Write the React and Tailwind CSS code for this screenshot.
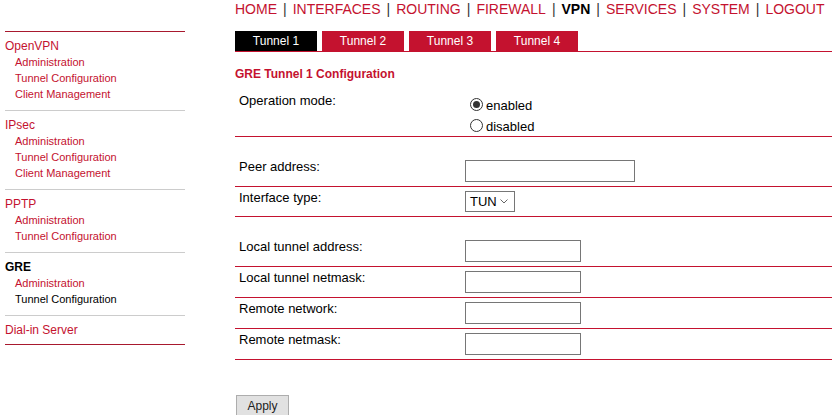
import React from "react";

const RED = "text-[#c4122f]";

function SideSection({ title, items, active, activeItem, last }) {
  return (
    <div
      className={
        "pt-[6px] border-t " +
        (last ? "pb-[6px] border-b border-b-[#a8192e] border-t-[#cccccc]" : "pb-[8px] ") +
        (title === "OpenVPN" ? " border-t-[#a8192e]" : " border-t-[#cccccc]")
      }
    >
      <div
        className={
          "text-[12px] leading-[16px] " +
          (active ? "text-black font-bold" : RED)
        }
      >
        {title}
      </div>
      {items.map((it) => (
        <div
          key={it}
          className={
            "pl-[10px] text-[11px] leading-[16px] " +
            (active && it === activeItem ? "text-black" : RED)
          }
        >
          {it}
        </div>
      ))}
    </div>
  );
}

function Row({ label, children, spacer, pb = "pb-[4px]" }) {
  return (
    <div className="grid grid-cols-[230px_1fr] border-b border-[#c4122f]">
      <div
        className={
          "pl-[4px] text-[13px] leading-[16px] text-black " +
          (spacer ? "pt-[22px]" : "pt-[3px]")
        }
      >
        {label}
      </div>
      <div className={(spacer ? "pt-[23px] " : "pt-[4px] ") + pb}>{children}</div>
    </div>
  );
}

function Input({ w }) {
  return <div className={"h-[22px] border border-[#767676] bg-white " + w} />;
}

function Radio({ checked, label }) {
  return (
    <div className="flex items-center h-[21px] text-[13px] text-black">
      <span className="ml-[5px] mr-[3px] w-[13px] h-[13px] rounded-full border border-[#333] flex items-center justify-center bg-white">
        {checked && <span className="w-[7px] h-[7px] rounded-full bg-[#333]" />}
      </span>
      <span className="mt-[2px]">{label}</span>
    </div>
  );
}

export default function App() {
  const nav = ["HOME", "INTERFACES", "ROUTING", "FIREWALL", "VPN", "SERVICES", "SYSTEM", "LOGOUT"];
  return (
    <div className="flex w-[832px] h-[415px] overflow-hidden bg-white font-['Liberation_Sans',Arial,sans-serif]">
      <aside className="w-[185px] shrink-0 pl-[5px] pt-[31px]">
        <SideSection title="OpenVPN" items={["Administration", "Tunnel Configuration", "Client Management"]} />
        <SideSection title="IPsec" items={["Administration", "Tunnel Configuration", "Client Management"]} />
        <SideSection title="PPTP" items={["Administration", "Tunnel Configuration"]} />
        <SideSection title="GRE" items={["Administration", "Tunnel Configuration"]} active activeItem="Tunnel Configuration" />
        <SideSection title="Dial-in Server" items={[]} last />
      </aside>
      <main className="flex-1 ml-[50px]">
        <nav className="h-[18px] text-[14px] leading-[18px] flex">
          {nav.map((n, i) => (
            <span key={n} className="flex">
              <span className={n === "VPN" ? "font-bold text-black" : RED}>{n}</span>
              {i < nav.length - 1 && <span className="ml-[6px] mr-[6px] text-[#333]">|</span>}
            </span>
          ))}
        </nav>
        <div className="mt-[13px] flex gap-[5px] border-b border-[#c4122f]">
          {["Tunnel 1", "Tunnel 2", "Tunnel 3", "Tunnel 4"].map((t, i) => (
            <div
              key={t}
              className={
                "w-[82px] h-[20px] flex items-center justify-center text-[12px] text-white " +
                (i === 0 ? "bg-black" : "bg-[#c4122f]")
              }
            >
              {t}
            </div>
          ))}
        </div>
        <div className="mt-[14px] text-[12px] leading-[16px] font-bold text-[#c4122f]">
          GRE Tunnel 1 Configuration
        </div>
        <div className="mt-[8px]">
          <Row label="Operation mode:" pb="pb-0">
            <Radio checked label="enabled" />
            <Radio label="disabled" />
          </Row>
          <Row label="Peer address:" spacer>
            <Input w="w-[170px]" />
          </Row>
          <Row label="Interface type:">
            <div className="w-[50px] h-[21px] border border-[#767676] bg-white flex items-center justify-between pl-[4px] pr-[6px] text-[13px] text-black">
              <span>TUN</span>
              <svg width="8" height="5" viewBox="0 0 8 5" fill="none">
                <path d="M0.5 0.5 L4 4 L7.5 0.5" stroke="#666" strokeWidth="1" />
              </svg>
            </div>
          </Row>
          <Row label="Local tunnel address:" spacer>
            <Input w="w-[116px]" />
          </Row>
          <Row label="Local tunnel netmask:">
            <Input w="w-[116px]" />
          </Row>
          <Row label="Remote network:">
            <Input w="w-[116px]" />
          </Row>
          <Row label="Remote netmask:">
            <Input w="w-[116px]" />
          </Row>
        </div>
        <button className="mt-[35px] ml-[1px] w-[53px] h-[22px] bg-[#e1e1e1] border border-[#adadad] text-[12px] text-[#222] flex items-center justify-center">
          Apply
        </button>
      </main>
    </div>
  );
}
